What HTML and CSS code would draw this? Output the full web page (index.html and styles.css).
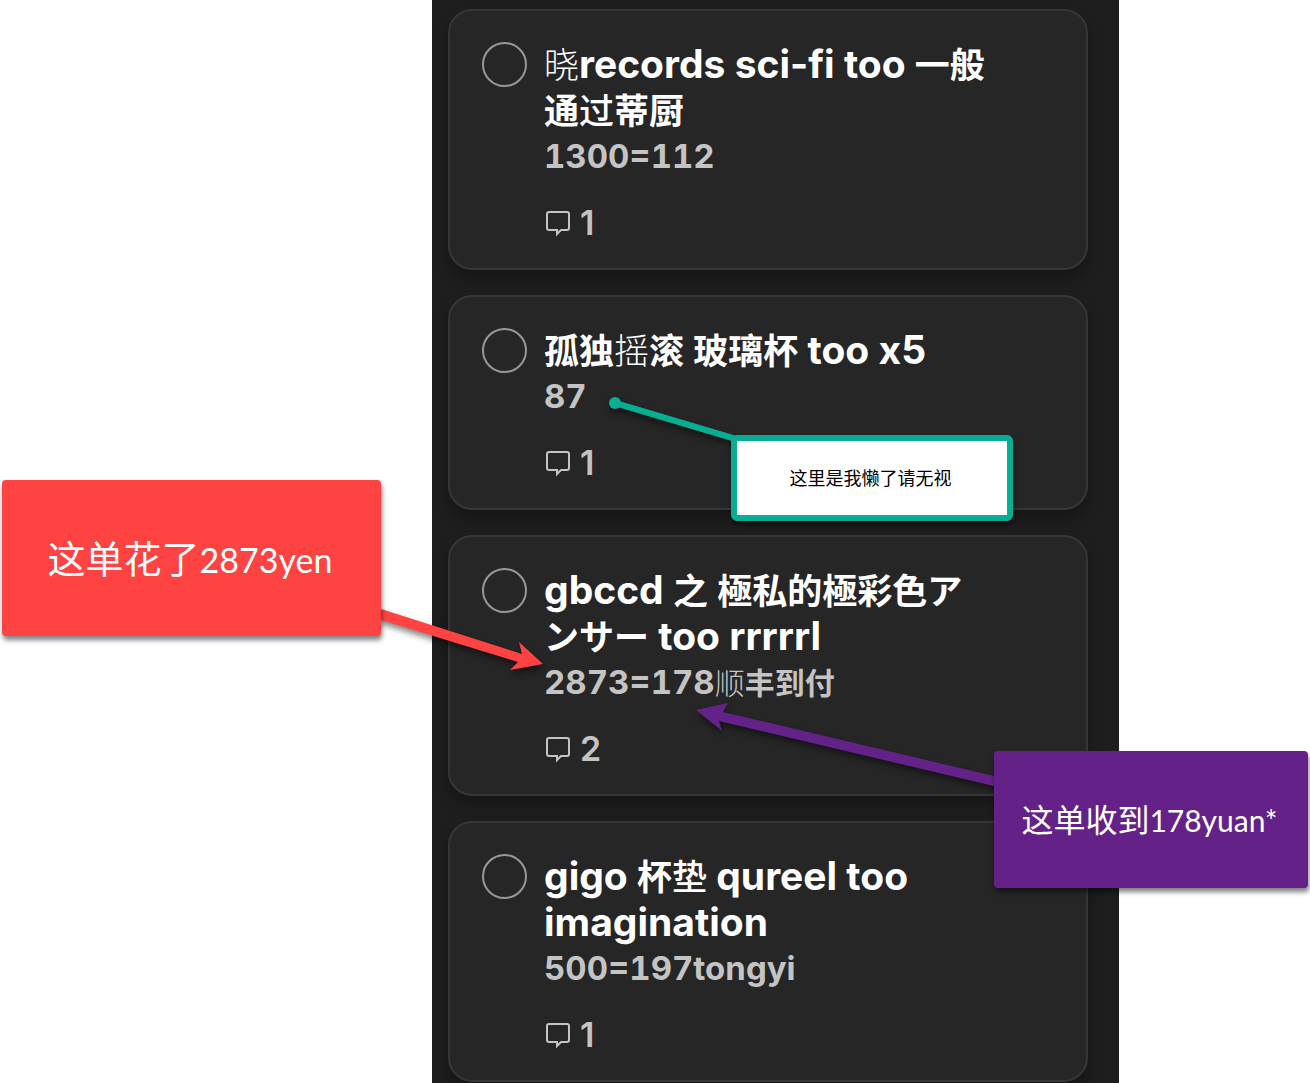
FILE: index.html
```html
<!DOCTYPE html>
<html lang="zh-CN">
<head>
    <meta charset="UTF-8">
    <title>Orders</title>
    <link rel="stylesheet" href="styles.css">
</head>
<body>
    <div class="page">
        <svg class="icon-defs" width="0" height="0" aria-hidden="true">
            <symbol id="comment" viewBox="0 0 28 28">
                <path d="M5 3h18a2 2 0 0 1 2 2v14a2 2 0 0 1-2 2h-6l-4 4v-4H5a2 2 0 0 1-2-2V5a2 2 0 0 1 2-2z" fill="none" stroke="currentColor" stroke-width="2"/>
            </symbol>
        </svg>

        <main class="board">
            <article class="card">
                <input type="checkbox" id="task1" class="card-check">
                <div class="card-body">
                    <label for="task1" class="card-title"><span class="thin">晓</span><span class="latin">records sci-fi too </span>一般通<span class="medium">过</span>蒂厨</label>
                    <div class="card-note"><span class="latin">1300=112</span></div>
                    <div class="card-comments"><svg class="comment-icon"><use href="#comment"/></svg>1</div>
                </div>
            </article>

            <article class="card">
                <input type="checkbox" id="task2" class="card-check">
                <div class="card-body">
                    <label for="task2" class="card-title">孤独<span class="thin">摇</span>滚<span class="latin"> </span>玻璃杯<span class="latin"> too x5</span></label>
                    <div class="card-note"><span class="latin">87</span></div>
                    <div class="card-comments"><svg class="comment-icon"><use href="#comment"/></svg>1</div>
                </div>
            </article>

            <article class="card">
                <input type="checkbox" id="task3" class="card-check">
                <div class="card-body">
                    <label for="task3" class="card-title"><span class="latin">gbccd </span>之<span class="latin"> </span><span lang="ja">極私的極彩色アンサー</span><span class="latin"> too rrrrrl</span></label>
                    <div class="card-note"><span class="latin">2873=178</span><span class="thin">顺</span>丰到付</div>
                    <div class="card-comments"><svg class="comment-icon"><use href="#comment"/></svg>2</div>
                </div>
            </article>

            <article class="card">
                <input type="checkbox" id="task4" class="card-check">
                <div class="card-body">
                    <label for="task4" class="card-title"><span class="latin">gigo </span>杯<span class="medium">垫</span><span class="latin"> qureel too imagination</span></label>
                    <div class="card-note"><span class="latin">500=197tongyi</span></div>
                    <div class="card-comments"><svg class="comment-icon"><use href="#comment"/></svg>1</div>
                </div>
            </article>
        </main>

        <!-- Pointers from the callouts to the notes -->
        <svg class="pointers" width="1310" height="1083" aria-hidden="true">
            <polygon class="pointer-red" points="378,608 522,654 519,642 543,664 510,670 518,662 378,619"/>
            <polygon class="pointer-purple" points="696,710 728,703 723,712 998,777 998,787 719,721 722,731"/>
            <g class="pointer-green">
                <circle cx="615" cy="403" r="6"/>
                <path d="M615 403L736 439" stroke-width="6"/>
            </g>
        </svg>

        <div class="callout callout-green"><p>这里是我懒了请无视</p></div>
        <div class="callout callout-red"><p>这单花了<span class="callout-latin">2873yen</span></p></div>
        <div class="callout callout-purple"><p>这单收到<span class="callout-latin">178yuan*</span></p></div>
    </div>
</body>
</html>
```

FILE: styles.css
```css
* {
    box-sizing: border-box;
}
body {
    margin: 0;
    background: #fff;
    font-family: Inter, "Noto Sans CJK SC", sans-serif;
}
.page {
    position: relative;
    min-height: 100vh;
    padding: 0 191px 0 432px;
    overflow: hidden;
}
.icon-defs {
    position: absolute;
}
.board {
    display: flex;
    flex-direction: column;
    gap: 25px;
    min-height: 100vh;
    padding: 9px 31px 0 16px;
    background: #1e1e1e;
}

/* Cards */
.card {
    display: flex;
    gap: 17px;
    padding: 31px 98px 22px 32px;
    background: #262626;
    border: 2px solid #363636;
    border-radius: 24px;
    box-shadow: 0 8px 14px rgba(0, 0, 0, 0.3);
}
.card-check {
    appearance: none;
    flex: none;
    width: 45px;
    height: 45px;
    margin: 0;
    border: 2px solid #989898;
    border-radius: 50%;
    cursor: pointer;
}
.card-body {
    flex: 1;
    min-width: 0;
}
.card-title {
    display: block;
    font-size: 35px;
    font-weight: 700;
    line-height: 46px;
    color: #fff;
}
.card-title [lang="ja"] {
    font-family: Inter, "Noto Sans CJK JP", sans-serif;
}
.card-title .latin {
    font-size: 39px;
    line-height: 1;
}
.card-note {
    font-size: 30px;
    font-weight: 700;
    line-height: 46px;
    color: #c4c4c4;
}
.card-note .latin {
    font-size: 33px;
    font-variant-numeric: tabular-nums;
    line-height: 1;
}
.card-title .thin,
.card-note .thin {
    font-weight: 300;
}
.card-title .medium {
    font-weight: 500;
}
.card-comments {
    display: flex;
    align-items: center;
    gap: 8px;
    margin-top: 20px;
    font-size: 34px;
    font-weight: 600;
    line-height: 46px;
    color: #c4c4c4;
}
.comment-icon {
    width: 28px;
    height: 28px;
}

/* Callouts */
.pointers {
    position: absolute;
    top: 0;
    left: 0;
    pointer-events: none;
}
.pointer-red,
.pointer-purple,
.pointer-green {
    filter: drop-shadow(1px 4px 3px rgba(0, 0, 0, 0.5));
}
.pointer-red {
    fill: #ff4343;
}
.pointer-purple {
    fill: #642289;
}
.pointer-green {
    fill: #08ae92;
    stroke: #08ae92;
    stroke-width: 0;
}
.callout {
    position: absolute;
    display: flex;
    align-items: center;
    justify-content: center;
    border-radius: 4px;
    box-shadow: 1px 4px 5px rgba(0, 0, 0, 0.5);
    color: #fff;
    font-family: "Noto Sans CJK SC", sans-serif;
    white-space: nowrap;
}
.callout p {
    margin: 0 3px 3px 0;
}
.callout-latin {
    font-family: Lato, sans-serif;
}
.callout-green {
    top: 435px;
    left: 731px;
    width: 282px;
    height: 86px;
    border: 6px solid #08ae92;
    border-radius: 6px;
    background: #fff;
    color: #000;
    font-size: 18px;
}
.callout-red {
    top: 480px;
    left: 2px;
    width: 379px;
    height: 156px;
    background: #ff4343;
    font-size: 38px;
}
.callout-red .callout-latin {
    font-size: 34px;
}
.callout-purple {
    top: 751px;
    left: 994px;
    width: 314px;
    height: 137px;
    background: #642289;
    font-size: 32px;
}
.callout-purple .callout-latin {
    font-size: 30px;
}
```
